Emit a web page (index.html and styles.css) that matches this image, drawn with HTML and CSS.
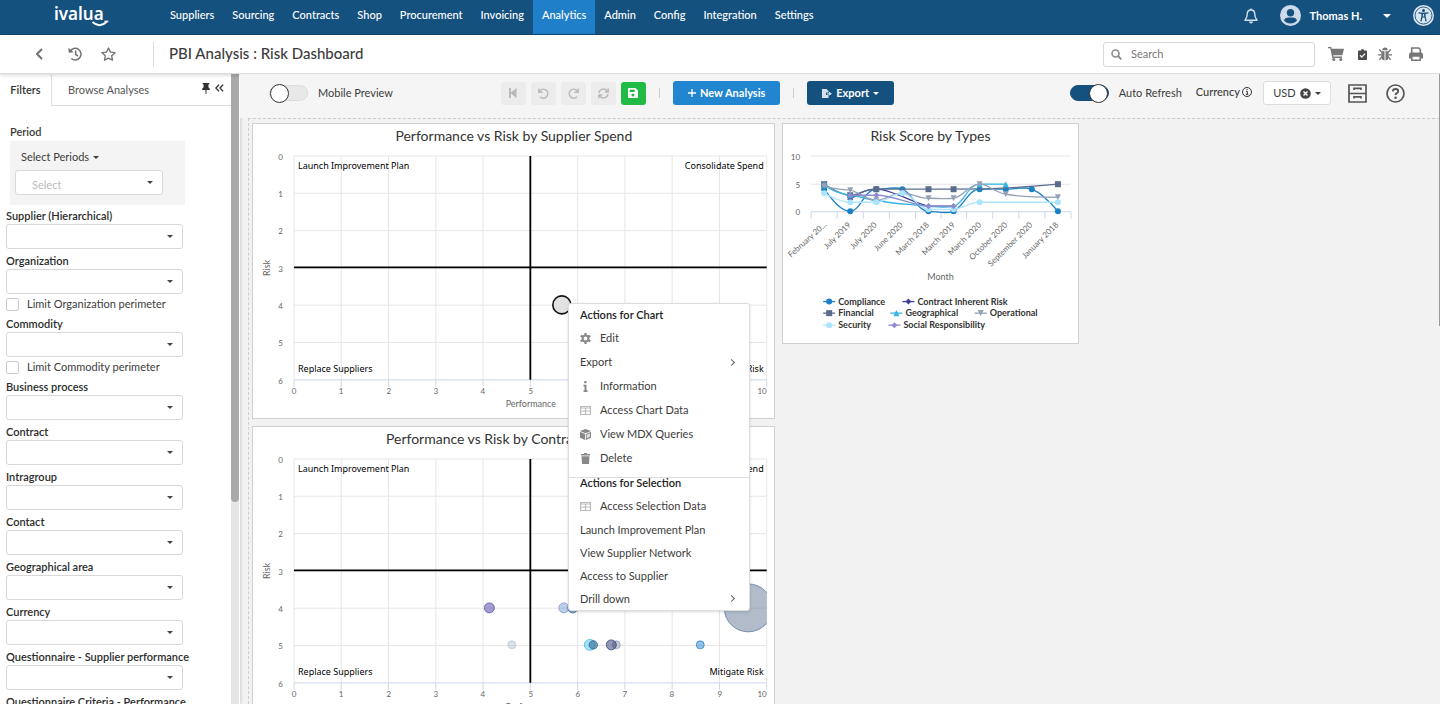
FILE: index.html
```html
<!DOCTYPE html>
<html lang="en">
<head>
<meta charset="utf-8">
<meta name="viewport" content="width=device-width, initial-scale=1">
<title>PBI Analysis : Risk Dashboard</title>
<link rel="stylesheet" href="styles.css">
</head>
<body class="app">

<header class="topbar">
  <a class="logo" href="#" aria-label="ivalua home">
    <span>ivalua</span>
    <svg class="logo-smile" viewBox="0 0 18 8"><path d="M1.500 2Q8.500 8.500 15.500 2M13.500 1.600L17.300 1.400" fill="none" stroke="#fff" stroke-width="1.900"/></svg>
  </a>
  <nav class="mainnav">
    <a href="#">Suppliers</a><a href="#">Sourcing</a><a href="#">Contracts</a><a href="#">Shop</a><a href="#">Procurement</a><a href="#">Invoicing</a><a href="#" class="active">Analytics</a><a href="#">Admin</a><a href="#">Config</a><a href="#">Integration</a><a href="#">Settings</a>
  </nav>
  <div class="account">
    <button class="plain" aria-label="Notifications"><svg width="14" height="16" viewBox="0 0 14 16"><path d="M7 2C4.300 2 3.200 4 3.200 6.300C3.200 9.500 2.300 10.500 1 12.200H13C11.700 10.500 10.800 9.500 10.800 6.300C10.800 4 9.700 2 7 2Z" fill="none" stroke="#d3e0ec" stroke-width="1.400" stroke-linejoin="round"/><path d="M6.300.4h1.400v1.600H6.300zM5 13.500h4a2 2 0 0 1-4 0z" fill="#d3e0ec"/></svg></button>
    <button class="user"><svg width="21" height="21" viewBox="0 0 21 21"><circle cx="10.500" cy="10.500" r="10.500" fill="#cddaea"/><circle cx="10.500" cy="7.800" r="3.700" fill="#15507f"/><path d="M4 15.500C5 12.500 7.500 12.600 10.500 12.600S16 12.500 17 15.500C15.500 17.600 13 18.500 10.500 18.500S5.500 17.600 4 15.500Z" fill="#15507f"/></svg><span>Thomas H.</span><i class="caret"></i></button>
    <button class="plain" aria-label="Accessibility"><svg width="21" height="21" viewBox="0 0 21 21"><circle cx="10.500" cy="10.500" r="10.500" fill="#d8e4f0"/><circle cx="10.500" cy="10.500" r="8.500" fill="none" stroke="#15507f" stroke-width=".9"/><circle cx="10.500" cy="5.500" r="1.500" fill="#15507f"/><path d="M6 7.900L10.500 8.700L15 7.900" fill="none" stroke="#15507f" stroke-width="1.300" stroke-linecap="round"/><path d="M9 8.300h3V11.500L13 16M9 8.300V11.500L8 16M9.300 8.500h2.400v3.500H9.300z" fill="none" stroke="#15507f" stroke-width="1.200" stroke-linecap="round"/></svg></button>
  </div>
</header>

<div class="titlebar">
  <div class="history">
    <button class="plain back" aria-label="Back"><svg width="9" height="12" viewBox="0 0 9 12"><path d="M7 1L2 6l5 5" fill="none" stroke="#717171" stroke-width="2"/></svg></button>
    <button class="plain" aria-label="History"><svg width="14" height="14" viewBox="0 0 14 14"><path d="M2.200 4.200A5.800 5.800 0 1 1 3.300 11.500M7.700 3.600v4l2.300 1.400" fill="none" stroke="#717171" stroke-width="1.500"/><path d="M.3.800L.8 5.800L5.700 5.200Z" fill="#717171"/></svg></button>
    <button class="plain" aria-label="Add to favourites"><svg width="15" height="14" viewBox="0 0 15 14"><path d="M7.500 1L9.500 5.100L14 5.700L10.700 8.800L11.500 13.200L7.500 11.100L3.500 13.200L4.300 8.800L1 5.700L5.500 5.100Z" fill="none" stroke="#717171" stroke-width="1.300" stroke-linejoin="round"/></svg></button>
  </div>
  <h1>PBI Analysis : Risk Dashboard</h1>
  <label class="search"><svg width="11" height="11" viewBox="0 0 11 11"><circle cx="4.500" cy="4.500" r="3.500" fill="none" stroke="#8b8b8b" stroke-width="1.600"/><path d="M7 7l3.300 3.300" stroke="#8b8b8b" stroke-width="1.900"/></svg><input type="text" placeholder="Search" aria-label="Search"></label>
  <div class="tools">
    <button class="plain" aria-label="Cart"><svg width="16" height="14" viewBox="0 0 16 14"><path d="M0 0h3.300L3.700 1.800H16L14.400 8.300H5.200L5.500 9.600H14V10.900H4.300L2.200 1.300H0Z" fill="#777"/><circle cx="5.800" cy="12.400" r="1.500" fill="#777"/><circle cx="12.800" cy="12.400" r="1.500" fill="#777"/></svg></button>
    <button class="plain" aria-label="Tasks"><svg width="9" height="11" viewBox="0 0 9 11"><path d="M1 1.500H3A1.500 1.500 0 0 1 6 1.500H8Q9 1.500 9 2.500V10Q9 11 8 11H1Q0 11 0 10V2.500Q0 1.500 1 1.500Z" fill="#4c4c4c"/><path d="M2 6.300l1.800 1.800L7 4.600" fill="none" stroke="#fff" stroke-width="1.300"/></svg></button>
    <button class="plain" aria-label="Debug"><svg width="14" height="14" viewBox="0 0 14 14"><path d="M4.300 3.200a2.700 2.700 0 0 1 5.400 0zM3.500 4.200h3V13.500Q3.500 13 3.200 10zM10.500 4.200h-3V13.500Q10.500 13 10.800 10z" fill="#777"/><path d="M1.300 2.500L3.800 5.300M12.700 2.500L10.200 5.300M0 7.800h3.500M14 7.800h-3.500M1.300 12.700L3.800 10M12.700 12.700L10.200 10" stroke="#777" stroke-width="1.300"/></svg></button>
    <button class="plain" aria-label="Print"><svg width="14" height="14" viewBox="0 0 14 14"><path d="M2.700 6V1H9.800L11.300 2.500V6" fill="none" stroke="#777" stroke-width="1.600"/><path d="M0 7.500Q0 5.500 2 5.500H12Q14 5.500 14 7.500V11.500H0Z" fill="#777"/><path d="M2.800 9h8.400v4.200H2.800z" fill="#fff" stroke="#777" stroke-width="1.500"/></svg></button>
  </div>
</div>

<div class="workspace">
  <aside class="sidebar">
    <div class="panel">
      <div class="tabs">
        <button class="tab active">Filters</button>
        <button class="tab">Browse Analyses</button>
        <div class="tab-tools">
          <button class="plain" aria-label="Pin"><svg width="8" height="11" viewBox="0 0 8 11"><path d="M.7 0h6.600v1.400H6.300L6.600 4.600Q8 5.400 8 7H0Q0 5.400 1.400 4.600L1.700 1.400H.7zM3.400 7h1.200L4.400 11H3.600z" fill="#333"/></svg></button>
          <button class="plain" aria-label="Collapse"><svg width="9" height="8" viewBox="0 0 9 8"><path d="M4 .6L1 4l3 3.400M8 .6L5 4l3 3.400" fill="none" stroke="#333" stroke-width="1.400"/></svg></button>
        </div>
      </div>
      <form class="filters">
        <div class="period">
          <strong>Period</strong>
          <div class="period-box">
            <button type="button" class="plain period-btn">Select Periods <i class="caret"></i></button>
            <div class="pick"><select class="muted" aria-label="Period"><option>Select</option></select></div>
          </div>
        </div>
        <div class="field"><label for="f1">Supplier (Hierarchical)</label><div class="pick"><select id="f1"><option></option></select></div></div>
        <div class="field"><label for="f2">Organization</label><div class="pick"><select id="f2"><option></option></select></div></div>
        <label class="check"><input type="checkbox">Limit Organization perimeter</label>
        <div class="field"><label for="f3">Commodity</label><div class="pick"><select id="f3"><option></option></select></div></div>
        <label class="check"><input type="checkbox">Limit Commodity perimeter</label>
        <div class="field"><label for="f4">Business process</label><div class="pick"><select id="f4"><option></option></select></div></div>
        <div class="field"><label for="f5">Contract</label><div class="pick"><select id="f5"><option></option></select></div></div>
        <div class="field"><label for="f6">Intragroup</label><div class="pick"><select id="f6"><option></option></select></div></div>
        <div class="field"><label for="f7">Contact</label><div class="pick"><select id="f7"><option></option></select></div></div>
        <div class="field"><label for="f8">Geographical area</label><div class="pick"><select id="f8"><option></option></select></div></div>
        <div class="field"><label for="f9">Currency</label><div class="pick"><select id="f9"><option></option></select></div></div>
        <div class="field"><label for="f10">Questionnaire - Supplier performance</label><div class="pick"><select id="f10"><option></option></select></div></div>
        <div class="field"><label for="f11">Questionnaire Criteria - Performance</label><div class="pick"><select id="f11"><option></option></select></div></div>
      </form>
    </div>
    <div class="scroll"><div class="thumb"></div></div>
  </aside>

  <main class="main">
    <div class="toolbar">
      <label class="switch"><input type="checkbox" role="switch">Mobile Preview</label>
      <div class="actions">
        <button class="icon-btn" disabled aria-label="First"><svg width="8" height="10" viewBox="0 0 8 10"><path d="M0 0h2v4.400L7.500 0v10L2 5.600V10H0z" fill="#b9b9b9"/></svg></button>
        <button class="icon-btn" disabled aria-label="Undo"><svg width="11" height="11" viewBox="0 0 11 11"><path d="M.8.500V4.300H4.600M1.200 3.900A4.500 4.500 0 1 1 2 8.700" fill="none" stroke="#b9b9b9" stroke-width="1.400"/></svg></button>
        <button class="icon-btn" disabled aria-label="Redo"><svg width="11" height="11" viewBox="0 0 11 11"><path d="M10.200.5V4.300H6.400M9.800 3.900A4.500 4.500 0 1 0 9 8.700" fill="none" stroke="#b9b9b9" stroke-width="1.400"/></svg></button>
        <button class="icon-btn" disabled aria-label="Refresh"><svg width="11" height="11" viewBox="0 0 11 11"><path d="M1 5A4.500 4.500 0 0 1 9.500 3.500M10.200.5V4H6.800M10 6A4.500 4.500 0 0 1 1.500 7.500M.8 10.500V7H4.200" fill="none" stroke="#b9b9b9" stroke-width="1.400"/></svg></button>
        <button class="icon-btn save" aria-label="Save"><svg width="10" height="10" viewBox="0 0 10 10"><path d="M1 0H7.500L10 2.500V9Q10 10 9 10H1Q0 10 0 9V1Q0 0 1 0Z" fill="#fff"/><path d="M1.700 1.700H6.700V4H1.700Z" fill="#21ba45"/><circle cx="5" cy="6.900" r="1.500" fill="#21ba45"/></svg></button>
      </div>
      <span class="sep"></span>
      <button class="btn blue"><svg width="8" height="8" viewBox="0 0 8 8"><path d="M4 0v8M0 4h8" stroke="#fff" stroke-width="1.300"/></svg>New Analysis</button>
      <span class="sep"></span>
      <button class="btn navy"><svg width="10" height="9" viewBox="0 0 10 9"><path d="M0 0H4.500L6.500 2V3.500H4V6H6.500V9H0ZM5 4.200H7V2.800L10 4.800L7 6.700V5.400H5Z" fill="#d5e0ea"/></svg>Export <i class="caret"></i></button>
      <div class="settings">
        <label class="switch"><input type="checkbox" role="switch" checked>Auto Refresh</label>
        <div class="currency"><span>Currency</span><svg width="10" height="10" viewBox="0 0 10 10"><circle cx="5" cy="5" r="4.500" fill="none" stroke="#333"/><path d="M4 4.300h1.300V7.300M3.900 7.300h2.400M4.500 2.500h1.100" fill="none" stroke="#333"/></svg></div>
        <button class="usd">USD <svg width="11" height="11" viewBox="0 0 11 11"><circle cx="5.500" cy="5.500" r="5.300" fill="#444"/><path d="M3.500 3.500l4 4M7.500 3.500l-4 4" stroke="#fff" stroke-width="1.500"/></svg><i class="caret"></i></button>
        <button class="plain" aria-label="Archive"><svg width="19" height="19" viewBox="0 0 19 19"><path d="M1 1h17v17H1zM1 9.500h17M6 6V4.300h7V6M6 14.500V12.800h7v1.700" fill="none" stroke="#555" stroke-width="1.700"/></svg></button>
        <button class="plain" aria-label="Help"><svg width="19" height="19" viewBox="0 0 19 19"><circle cx="9.500" cy="9.500" r="8.500" fill="none" stroke="#555" stroke-width="1.700"/><path d="M6.900 7.400Q7 5 9.600 5Q12.200 5 12.200 7.200Q12.200 8.400 10.800 9.100Q9.600 9.700 9.600 11" fill="none" stroke="#555" stroke-width="1.900"/><circle cx="9.600" cy="13.700" r="1.300" fill="#555"/></svg></button>
      </div>
    </div>

    <div class="canvas">
      <div class="col wide">
        <section class="card">
          <svg class="chart" viewBox="-41 -32 521 294" role="img" aria-label="Performance vs Risk by Supplier Spend">
            <defs>
              <g id="frame">
                <path class="grid" d="M0 0H473M0 37.300H473M0 74.700H473M0 112H473M0 149.300H473M0 186.700H473M0 0V224M47.300 0V224M94.600 0V224M141.900 0V224M189.200 0V224M236.500 0V224M283.800 0V224M331.100 0V224M378.400 0V224M425.700 0V224M473 0V224"/>
                <path class="axis" d="M0 224H473M0 224v7M47.300 224v7M94.600 224v7M141.900 224v7M189.200 224v7M236.500 224v7M283.800 224v7M331.100 224v7M378.400 224v7M425.700 224v7M473 224v7"/>
                <g class="tick end"><text x="-11" y="4">0</text><text x="-11" y="41">1</text><text x="-11" y="78">2</text><text x="-11" y="116">3</text><text x="-11" y="153">4</text><text x="-11" y="190">5</text><text x="-11" y="228">6</text><text x="473" y="238">10</text></g>
                <g class="tick mid"><text x="0" y="238">0</text><text x="47" y="238">1</text><text x="95" y="238">2</text><text x="142" y="238">3</text><text x="189" y="238">4</text><text x="237" y="238">5</text><text x="284" y="238">6</text><text x="331" y="238">7</text><text x="378" y="238">8</text><text x="426" y="238">9</text></g>
                <text class="axis-title" x="237" y="251">Performance</text>
                <text class="axis-title" transform="translate(-24 112) rotate(-90)">Risk</text>
              </g>
              <g id="quadrants">
                <path d="M236.500 0V224M0 111.500H473" stroke="#000" stroke-width="1.800"/>
                <g class="quad"><text x="4" y="13">Launch Improvement Plan</text><text x="4" y="216">Replace Suppliers</text></g>
                <g class="quad end"><text x="470" y="13">Consolidate Spend</text><text x="470" y="216">Mitigate Risk</text></g>
              </g>
              <clipPath id="plot"><path d="M0 0H473V224H0z"/></clipPath>
            </defs>
            <text class="chart-title" x="220" y="-15">Performance vs Risk by Supplier Spend</text>
            <use href="#frame"/>
            <use href="#quadrants"/>
            <circle cx="268" cy="149" r="9" fill="#e2e2e2" stroke="#111" stroke-width="1.600"/>
          </svg>
        </section>
        <section class="card">
          <svg class="chart" viewBox="-41 -32 521 294" role="img" aria-label="Performance vs Risk by Contracted Spend">
            <text class="chart-title" x="220" y="-15">Performance vs Risk by Contracted Spend</text>
            <use href="#frame"/>
            <g clip-path="url(#plot)" fill-opacity=".5" stroke-opacity=".7">
              <circle cx="195.500" cy="149" r="5" fill="#4a3fa5" stroke="#4a3fa5"/>
              <circle cx="218" cy="186" r="4" fill="#b4c6d8" stroke="#b4c6d8"/>
              <circle cx="270" cy="149" r="5" fill="#7aa0d6" stroke="#7a8fc8"/>
              <circle cx="279" cy="149" r="5" fill="#1f5fa8" stroke="#1f5fa8"/>
              <circle cx="296" cy="186" r="5.500" fill="#4cc4f2" stroke="#35b3e8"/>
              <circle cx="299.500" cy="186" r="4.200" fill="#1e4f82" stroke="#1e4f82"/>
              <circle cx="322.500" cy="186" r="4" fill="#8e9ab2" stroke="#8e9ab2"/>
              <circle cx="317.500" cy="186" r="5" fill="#26326e" stroke="#26326e"/>
              <circle cx="406.500" cy="186" r="4" fill="#2088d0" stroke="#1f78bb"/>
              <circle cx="454.500" cy="149" r="24" fill="#637794" stroke="#4d6d95"/>
            </g>
            <use href="#quadrants"/>
          </svg>
        </section>
      </div>

      <div class="col narrow">
        <section class="card">
          <svg class="chart" viewBox="-28 -32 294 218" role="img" aria-label="Risk Score by Types">
            <defs>
              <marker id="m1" markerUnits="userSpaceOnUse" markerWidth="8" markerHeight="8" refX="4" refY="4"><circle cx="4" cy="4" r="3" fill="#1b80c6"/></marker>
              <marker id="m2" markerUnits="userSpaceOnUse" markerWidth="8" markerHeight="8" refX="4" refY="4"><path d="M4 1l3 3l-3 3l-3-3z" fill="#40409c"/></marker>
              <marker id="m3" markerUnits="userSpaceOnUse" markerWidth="8" markerHeight="8" refX="4" refY="4"><path d="M1 1h6v6H1z" fill="#5b6d8d"/></marker>
              <marker id="m4" markerUnits="userSpaceOnUse" markerWidth="8" markerHeight="8" refX="4" refY="4"><path d="M4 1l3 6H1z" fill="#36b4e5"/></marker>
              <marker id="m5" markerUnits="userSpaceOnUse" markerWidth="8" markerHeight="8" refX="4" refY="4"><path d="M4 7l3-6H1z" fill="#95a2b6"/></marker>
              <marker id="m6" markerUnits="userSpaceOnUse" markerWidth="8" markerHeight="8" refX="4" refY="4"><circle cx="4" cy="4" r="3" fill="#ace5fb"/></marker>
              <marker id="m7" markerUnits="userSpaceOnUse" markerWidth="8" markerHeight="8" refX="4" refY="4"><path d="M4 1l3 3l-3 3l-3-3z" fill="#8e8cd0"/></marker>
            </defs>
            <text class="chart-title" x="119" y="-15">Risk Score by Types</text>
            <path class="grid" d="M0 0H259M0 28H259"/>
            <path class="axis" d="M0 55.500H259M0 55.500v7M26 55.500v7M52 55.500v7M78 55.500v7M104 55.500v7M129.500 55.500v7M155 55.500v7M181 55.500v7M207 55.500v7M233 55.500v7M259 55.500v7"/>
            <g class="tick end big"><text x="-11" y="4">10</text><text x="-11" y="32">5</text><text x="-11" y="59">0</text></g>
            <g class="series">
              <path class="s1" d="M13 33C20 42 29 55 39 55C49 55 53 33 65 33C74 33 84 30 91 33C101 37 106 55 117 55C125 55 134 58 142 55C152 50 157 33 168 33C177 33 186 33 194 33C203 33 213 30 220 33C230 37 240 48 246 55"/>
              <path class="s2" d="M39 43C49 36 55 33 65 33C80 33 102 47 117 50L142 50"/>
              <path class="s3" d="M13 28C22 33 30 39 39 39C49 38 54 33 65 33L117 33L142 33C175 33 215 31 246 28"/>
              <path class="s4" d="M13 28C20 35 29 37 39 39C49 40 55 43 65 44C83 48 100 48 117 50C126 50 134 52 142 50C152 48 156 28 168 28L194 28"/>
              <path class="s5" d="M13 30C22 33 30 33 39 34C49 36 54 44 65 44C75 44 82 36 91 37C101 37 106 42 117 42C126 42 134 43 142 42C153 40 157 28 168 28C177 28 182 36 194 38C211 41 228 41 246 41"/>
              <path class="s6" d="M13 37C21 41 29 46 39 46L65 46C75 46 81 37 91 37C101 37 105 52 117 53L142 53C152 52 158 46 168 46L246 46"/>
              <path class="s7" d="M39 39L65 39C84 39 99 49 117 50L142 50"/>
            </g>
            <g class="tick end">
              <text transform="translate(16 69) rotate(-42)">February 20…</text>
              <text transform="translate(40 69) rotate(-45)">July 2019</text>
              <text transform="translate(66 69) rotate(-45)">July 2020</text>
              <text transform="translate(92 69) rotate(-45)">June 2020</text>
              <text transform="translate(118 69) rotate(-45)">March 2018</text>
              <text transform="translate(144 69) rotate(-45)">March 2019</text>
              <text transform="translate(170 69) rotate(-45)">March 2020</text>
              <text transform="translate(196 69) rotate(-45)">October 2020</text>
              <text transform="translate(221 69) rotate(-45)">September 2020</text>
              <text transform="translate(247 69) rotate(-45)">January 2018</text>
            </g>
            <text class="axis-title" x="129" y="123">Month</text>
            <g class="series keys">
              <path class="s1" d="M12 145h6h6"/><path class="s2" d="M91 145h6h6"/>
              <path class="s3" d="M12 156.500h6h6"/><path class="s4" d="M79 156.500h6h6"/><path class="s5" d="M163 156.500h6h6"/>
              <path class="s6" d="M12 168.500h6h6"/><path class="s7" d="M77 168.500h6h6"/>
            </g>
            <g class="legend">
              <text x="27" y="148">Compliance</text><text x="106" y="148">Contract Inherent Risk</text>
              <text x="27" y="159">Financial</text><text x="94" y="159">Geographical</text><text x="178" y="159">Operational</text>
              <text x="27" y="171">Security</text><text x="92" y="171">Social Responsibility</text>
            </g>
          </svg>
        </section>
      </div>

      <div class="menu" role="menu">
        <h2>Actions for Chart</h2>
        <button role="menuitem"><svg viewBox="0 0 11 11"><circle cx="5.500" cy="5.500" r="2.900" fill="none" stroke="#888" stroke-width="2"/><path d="M5.500 0v2M5.500 9v2M.7 2.800l1.800 1M8.500 7.200l1.800 1M.7 8.200l1.800-1M8.500 3.800l1.800-1" stroke="#888" stroke-width="2.200"/></svg>Edit</button>
        <button role="menuitem">Export<i class="chev"></i></button>
        <button role="menuitem"><svg viewBox="0 0 11 11"><path d="M4.200 0h2.300v2.200H4.200zM3.500 3.700h3v5.500h1V11h-4V9.200h1V5.400h-1z" fill="#888"/></svg>Information</button>
        <button role="menuitem"><svg viewBox="0 0 11 11"><path d="M.6 1.500h9.800v8H.6zM.5 3h10M.5 6h10M5.500 3v6.500" fill="none" stroke="#bbb" stroke-width="1.200"/></svg>Access Chart Data</button>
        <button role="menuitem"><svg viewBox="0 0 11 11"><path d="M5.500 0L11 2L5.500 4.300L0 2ZM0 2.800L5.100 5V11L0 8.700ZM11 2.800V8.700L5.900 11V5Z" fill="#888"/><path d="M6.700 5.700l3.300-1.400v3.500L6.700 9.300z" fill="#ddd"/></svg>View MDX Queries</button>
        <button role="menuitem"><svg viewBox="0 0 11 11"><path d="M1 1h2.800L4.200 0h2.600l.4 1H10v1.500H1zM1.500 3.300h8L9 11H2z" fill="#888"/></svg>Delete</button>
        <h2 class="divided">Actions for Selection</h2>
        <button role="menuitem"><svg viewBox="0 0 11 11"><path d="M.6 1.500h9.800v8H.6zM.5 3h10M.5 6h10M5.500 3v6.500" fill="none" stroke="#bbb" stroke-width="1.200"/></svg>Access Selection Data</button>
        <button role="menuitem" class="tight">Launch Improvement Plan</button>
        <button role="menuitem" class="tight">View Supplier Network</button>
        <button role="menuitem" class="tight">Access to Supplier</button>
        <button role="menuitem" class="tight">Drill down<i class="chev"></i></button>
      </div>
    </div>
    <div class="page-thumb"></div>
  </main>
</div>
</body>
</html>
```
FILE: styles.css
```css
* { box-sizing: border-box; }

.app {
  margin: 0;
  height: 100vh;
  display: flex;
  flex-direction: column;
  overflow: hidden;
  font: 11px/16px Lato, sans-serif;
  color: #3c3c3c;
  background: #f2f2f2;
}

button, input, select { font: inherit; color: inherit; margin: 0; }
button { cursor: pointer; }
svg { display: block; flex: none; }
.plain { display: flex; align-items: center; padding: 0; border: 0; background: none; }

.caret {
  width: 0;
  height: 0;
  border: 3px solid transparent;
  border-top-color: currentColor;
  border-bottom: 0;
}

/* Top navigation */
.topbar {
  flex: none;
  height: 35px;
  display: flex;
  background: #15517f;
  border-bottom: 1px solid #12466f;
  color: #fff;
}
.logo {
  position: relative;
  width: 161px;
  padding-left: 54px;
  color: #fff;
  text-decoration: none;
  font: 600 17px/27px "Noto Sans", sans-serif;
}
.logo-smile { position: absolute; left: 91px; top: 20px; width: 18px; height: 8px; }
.mainnav { display: flex; }
.mainnav a {
  padding: 7px 9px 0;
  color: #fff;
  font-weight: 500;
  text-decoration: none;
}
.mainnav .active { background: #1f7fc8; }
.account {
  margin-left: auto;
  padding-right: 6px;
  height: 31px;
  display: flex;
  align-items: center;
  gap: 22px;
}
.user {
  display: flex;
  align-items: center;
  padding: 0;
  border: 0;
  background: none;
  font-weight: 700;
  color: #fff;
}
.user span { margin: 0 21px 0 9px; }
.user .caret { border-width: 4px 4px 0; }

/* Title bar */
.titlebar {
  position: relative;
  flex: none;
  height: 39px;
  display: flex;
  align-items: center;
  padding-right: 17px;
  background: #fff;
  border-bottom: 1px solid #ddd;
  box-shadow: 0 1px 4px rgba(0, 0, 0, .18);
}
.history {
  width: 154px;
  height: 25px;
  display: flex;
  align-items: center;
  gap: 19px;
  padding-left: 35px;
  border-right: 1px solid #ddd;
}
.back { margin-right: 5px; }
h1 { margin: 0 auto 2px 15px; font-size: 15px; line-height: 20px; font-weight: 500; }
.search {
  width: 212px;
  height: 25px;
  display: flex;
  align-items: center;
  gap: 9px;
  padding: 0 7px;
  border: 1px solid #d8d8d8;
  border-radius: 3px;
}
.search input { flex: 1; min-width: 0; border: 0; padding: 0; outline: 0; background: none; }
.search input::placeholder { color: #777; opacity: 1; }
.tools { display: flex; align-items: center; margin-left: 13px; }
.tools .plain:nth-child(2) { margin: 0 11px 0 14px; }
.tools .plain:nth-child(4) { margin-left: 17px; }

/* Sidebar */
.workspace { flex: 1; min-height: 0; display: flex; }
.sidebar { flex: none; width: 240px; display: flex; background: #fff; box-shadow: 1px 0 3px rgba(0, 0, 0, .15); }
.panel { flex: 1; overflow: hidden; }
.scroll { width: 8px; margin-right: 1px; background: #e6e6e6; }
.thumb { height: 68%; border-radius: 0 0 4px 4px; background: #a9a9a9; }
.tabs { height: 32px; display: flex; border-bottom: 1px solid #ddd; }
.tab { height: 31px; padding: 0 16px; border: 0; background: #fff; color: #555; }
.tab.active {
  width: 52px;
  height: 32px;
  padding: 0;
  border-right: 1px solid #ddd;
  border-top-right-radius: 3px;
  font-weight: 600;
  color: #333;
}
.tab-tools { display: flex; align-items: center; gap: 5px; height: 28px; margin: 0 7px 0 auto; }

.filters { padding: 18px 48px 0 6px; }
.period { padding: 0 0 0 4px; }
.period strong { display: block; font-weight: 600; }
.period-box { width: 175px; margin: 1px 0 3px; padding: 8px 5px 10px; height: 64px; background: #f4f4f4; }
.period-btn { gap: 4px; margin-left: 6px; }
.period-box .pick { width: 148px; margin-top: 5px; }
.pick { position: relative; }
.pick::after {
  content: "";
  position: absolute;
  right: 10px;
  top: 11px;
  border: 3px solid transparent;
  border-top-color: #444;
  border-bottom: 0;
  pointer-events: none;
}
.pick select {
  display: block;
  width: 100%;
  height: 25px;
  appearance: none;
  border: 1px solid #d8d8d8;
  border-radius: 3px;
  background: #fff;
}
.pick .muted { padding: 4px 16px 0; color: #bbb; }
.field { margin-bottom: 4px; }
.field label { display: block; height: 16px; font-weight: 600; color: #2c2c2c; white-space: nowrap; }
.check { display: flex; align-items: center; gap: 8px; height: 18px; margin: -3px 0 3px; white-space: nowrap; }
.check input {
  appearance: none;
  width: 13px;
  height: 13px;
  border: 1px solid #ccc;
  border-radius: 2px;
  background: #fff;
}

/* Toolbar */
.main { position: relative; flex: 1; min-width: 0; display: flex; flex-direction: column; }
.toolbar {
  flex: none;
  height: 44px;
  display: flex;
  align-items: center;
  padding: 0 35px 6px 29px;
  background: #f5f5f5;
}
.switch { display: flex; align-items: center; gap: 10px; white-space: nowrap; }
.switch input {
  appearance: none;
  display: flex;
  width: 39px;
  height: 16px;
  border: 1px solid #ddd;
  border-radius: 8px;
  background: #e8e8e8;
  align-items: center;
}
.switch input::before {
  content: "";
  flex: none;
  width: 17px;
  height: 17px;
  border: 1px solid #333;
  border-radius: 50%;
  background: #fff;
}
.switch input:checked { justify-content: flex-end; border-color: #15517f; background: #15517f; }
.actions { display: flex; gap: 5px; margin-left: 108px; }
.icon-btn {
  width: 25px;
  height: 23px;
  display: flex;
  align-items: center;
  justify-content: center;
  padding: 0;
  border: 0;
  border-radius: 3px;
  background: #ececec;
}
.save { background: #21ba45; }
.sep { width: 1px; height: 10px; margin: 0 13px; background: #ccc; }
.btn {
  height: 24px;
  display: flex;
  align-items: center;
  justify-content: center;
  gap: 4px;
  padding: 0 15px;
  border: 0;
  border-radius: 3px;
  color: #fff;
  font-weight: 700;
  white-space: nowrap;
}
.blue { background: #2185d0; }
.navy { background: #15517f; }
.settings { display: flex; align-items: center; margin-left: auto; }
.currency { display: flex; align-items: center; gap: 2px; margin: 0 11px 2px 14px; font-weight: 500; }
.usd {
  width: 68px;
  height: 24px;
  display: flex;
  align-items: center;
  justify-content: center;
  gap: 4px;
  margin-right: 17px;
  padding: 0;
  border: 1px solid #ddd;
  border-radius: 3px;
  background: #fff;
}
.settings .plain + .plain { margin-left: 19px; }

/* Dashboard */
.canvas {
  position: relative;
  flex: 1;
  min-height: 0;
  display: flex;
  align-items: flex-start;
  gap: 7px;
  margin-left: 8px;
  padding: 4px 0 0 3px;
  border: 1px dashed #ccc;
  border-width: 1px 0 0 1px;
}
.col { display: flex; flex-direction: column; gap: 7px; }
.wide { width: 44%; }
.narrow { width: 25%; }
.card { border: 1px solid #d0d0d0; background: #fff; }
.chart { width: 100%; height: auto; font-family: Lato, sans-serif; }
.grid { fill: none; stroke: #e6e6e6; }
.axis { fill: none; stroke: #ccd6eb; }
.chart-title { font-size: 14px; fill: #333; text-anchor: middle; }
.axis-title { font-size: 9px; fill: #666; text-anchor: middle; }
.tick { font-size: 8px; fill: #666; }
.mid { text-anchor: middle; }
.end { text-anchor: end; }
.quad { font: 9px "Noto Sans", sans-serif; fill: #000; }
.legend { font-size: 9px; font-weight: 700; fill: #333; }
.series { fill: none; stroke-width: 1.3; }
.s1 { stroke: #1b80c6; marker: url(#m1); }
.s2 { stroke: #40409c; marker: url(#m2); }
.s3 { stroke: #5b6d8d; marker: url(#m3); }
.s4 { stroke: #36b4e5; marker: url(#m4); }
.s5 { stroke: #95a2b6; marker: url(#m5); }
.s6 { stroke: #ace5fb; marker: url(#m6); }
.s7 { stroke: #8e8cd0; marker: url(#m7); }
.keys path { marker-start: none; marker-end: none; }

/* Context menu */
.menu {
  position: absolute;
  left: 319px;
  top: 184px;
  width: 182px;
  border: 1px solid #ddd;
  border-radius: 3px;
  background: #fff;
  box-shadow: 0 1px 3px rgba(0, 0, 0, .15);
}
.menu h2 { margin: 0; padding: 3px 11px; font-size: 11px; line-height: 16px; font-weight: 600; color: #222; }
.menu .divided { margin-top: 7px; padding: 0 11px 6px; border-top: 1px solid #ddd; line-height: 10px; }
.menu button {
  width: 100%;
  height: 24px;
  display: flex;
  align-items: center;
  gap: 9px;
  padding: 0 11px;
  border: 0;
  background: none;
}
.menu .tight { height: 23px; }
.menu button svg { width: 11px; height: 11px; }
.chev {
  width: 5px;
  height: 5px;
  margin: 0 4px 0 auto;
  border: solid #666;
  border-width: 1px 1px 0 0;
  transform: rotate(45deg);
}

.page-thumb { position: absolute; right: 0; top: 0; width: 1px; height: 40%; background: #999; }
```
